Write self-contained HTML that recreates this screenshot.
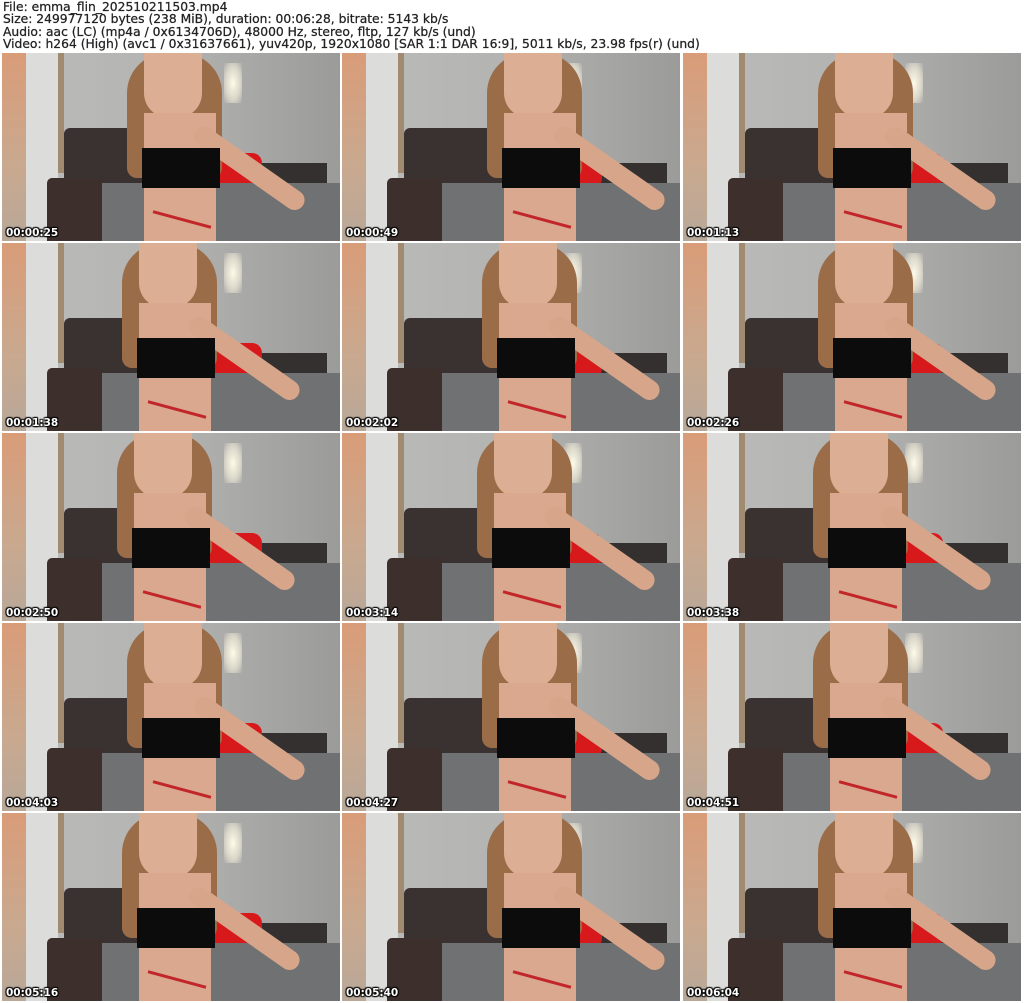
<!DOCTYPE html>
<html><head><meta charset="utf-8"><style>
*{margin:0;padding:0;box-sizing:border-box}
body{width:1024px;height:1003px;background:#fff;position:relative;overflow:hidden}
#hd{position:absolute;left:3px;top:1px;font-family:"DejaVu Sans",Verdana,sans-serif;font-size:12px;line-height:12.4px;color:#222;white-space:pre;transform:scaleX(1.025);transform-origin:0 0;-webkit-text-stroke:0.25px #222}
.t{position:absolute;width:338px;height:188px;overflow:hidden;background:linear-gradient(90deg,#bcbcba 0%,#b3b3b1 50%,#9b9b99 100%)}
.t div{position:absolute}
.ts{position:absolute;left:4px;bottom:2px;color:#fff;font-family:"DejaVu Sans",Verdana,sans-serif;font-weight:bold;font-size:10.5px;text-shadow:1px 1px 1px #000,-1px -1px 1px #000,1px -1px 1px #000,-1px 1px 1px #000}
</style></head><body>
<div id="hd">File: emma_flin_202510211503.mp4
Size: 249977120 bytes (238 MiB), duration: 00:06:28, bitrate: 5143 kb/s
Audio: aac (LC) (mp4a / 0x6134706D), 48000 Hz, stereo, fltp, 127 kb/s (und)
Video: h264 (High) (avc1 / 0x31637661), yuv420p, 1920x1080 [SAR 1:1 DAR 16:9], 5011 kb/s, 23.98 fps(r) (und)</div>
<script>
var times=["00:00:25","00:00:49","00:01:13","00:01:38","00:02:02","00:02:26","00:02:50","00:03:14","00:03:38","00:04:03","00:04:27","00:04:51","00:05:16","00:05:40","00:06:04"];
var xs=[2,342,683],ys=[53,243,433,623,813];
var off=[0,20,10,-5,15,10,-10,10,5,0,15,5,-5,20,10];
var h="";
for(var i=0;i<15;i++){
var x=xs[i%3],y=ys[Math.floor(i/3)],o=off[i];
h+='<div class="t" style="left:'+x+'px;top:'+y+'px">'+
'<div style="left:0;top:0;width:24px;height:188px;background:linear-gradient(#d99c78,#c9a98f 60%,#b8a898)"></div>'+
'<div style="left:24px;top:0;width:32px;height:188px;background:#dcdcda"></div>'+
'<div style="left:56px;top:0;width:6px;height:120px;background:#a08a70"></div>'+
'<div style="left:222px;top:10px;width:18px;height:40px;background:radial-gradient(#fffbe8,#d8d4c8 60%,rgba(0,0,0,0))"></div>'+
'<div style="left:62px;top:75px;width:130px;height:75px;background:#3a3131;border-radius:6px"></div>'+
'<div style="left:230px;top:110px;width:95px;height:25px;background:#33302f"></div>'+
'<div style="left:205px;top:100px;width:55px;height:35px;background:#d8191c;border-radius:10px"></div>'+
'<div style="left:90px;top:130px;width:248px;height:58px;background:#707172"></div>'+
'<div style="left:45px;top:125px;width:55px;height:63px;background:#3d302c;border-radius:5px 5px 0 0"></div>'+
'<div style="left:'+(125+o)+'px;top:0;width:95px;height:125px;background:#9b6c48;border-radius:40px 40px 10px 10px"></div>'+
'<div style="left:'+(142+o)+'px;top:0;width:58px;height:65px;background:#dcae93;border-radius:0 0 25px 25px"></div>'+
'<div style="left:'+(142+o)+'px;top:60px;width:72px;height:128px;background:#d9a88e"></div>'+
'<div style="left:'+(200+o)+'px;top:70px;width:130px;height:20px;background:#d6a58a;transform:rotate(35deg);transform-origin:0 0;border-radius:10px"></div>'+
'<div style="left:'+(140+o)+'px;top:95px;width:78px;height:40px;background:#0c0c0c"></div>'+
'<div style="left:'+(150+o)+'px;top:165px;width:60px;height:3px;background:#c2262a;transform:rotate(15deg)"></div>'+
'<span class="ts">'+times[i]+'</span></div>';
}
document.write(h);
</script>
</body></html>
